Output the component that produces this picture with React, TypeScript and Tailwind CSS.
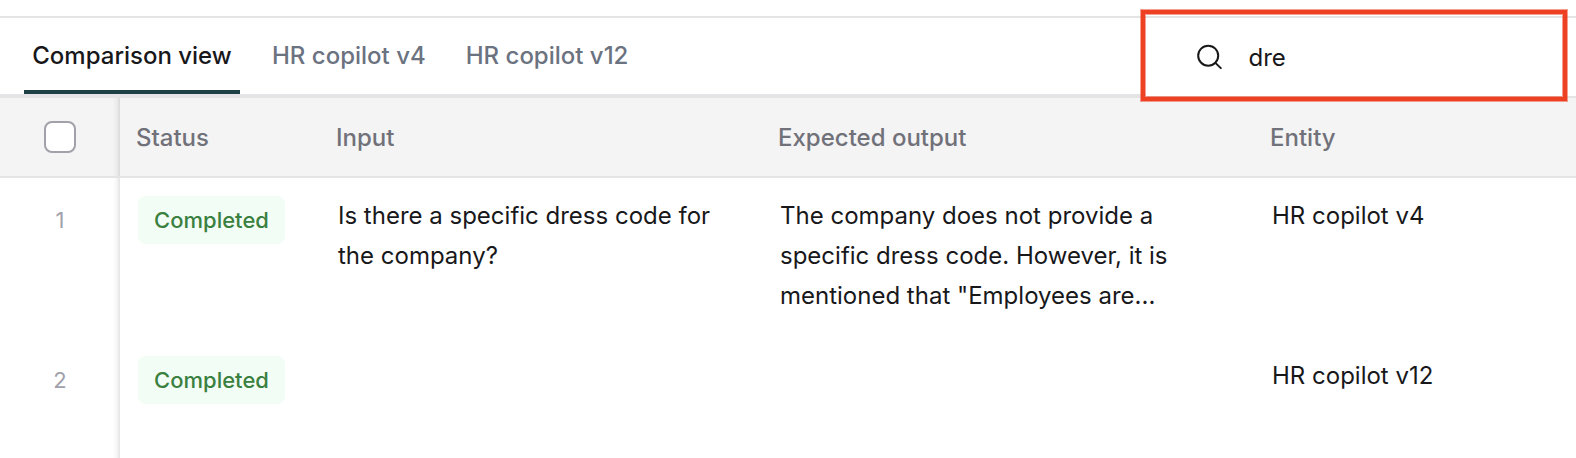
import React from "react";

const tabs = ["Comparison view", "HR copilot v4", "HR copilot v12"];

const rows = [
  {
    id: 1,
    status: "Completed",
    input: ["Is there a specific dress code for", "the company?"],
    expected: [
      "The company does not provide a",
      "specific dress code. However, it is",
      'mentioned that "Employees are...',
    ],
    entity: "HR copilot v4",
  },
  { id: 2, status: "Completed", input: [], expected: [], entity: "HR copilot v12" },
];

const edge =
  "w-[120px] shrink-0 flex justify-center bg-[linear-gradient(to_left,rgba(0,0,0,0.11),rgba(0,0,0,0.04)_3px,transparent_7px)]";

function Lines({ lines }: { lines: string[] }) {
  return (
    <>
      {lines.map((line) => (
        <div key={line} className="whitespace-nowrap">
          {line}
        </div>
      ))}
    </>
  );
}

export default function App() {
  return (
    <div className="relative flex h-[458px] w-[1576px] flex-col overflow-hidden bg-white pt-4 font-['Inter',sans-serif] text-2xl text-[#18181b]">
      <div className="flex h-[82px] shrink-0 border-y-2 border-[#e4e4e4]">
        <div className="flex grow gap-6 border-b-2 border-[#e4e4e7] pl-6">
          {tabs.map((tab, i) => (
            <button
              key={tab}
              className={
                i === 0
                  ? "h-[76px] w-[216px] border-b-4 border-[#1d4044] pt-[3px] font-medium whitespace-nowrap text-[#18181b]"
                  : "h-[76px] border-b-4 border-transparent px-2 pt-[3px] font-medium whitespace-nowrap text-[#6b7280]"
              }
            >
              {tab}
            </button>
          ))}
        </div>
        <label className="flex w-[430px] shrink-0 items-center gap-[24.5px] pl-[50px]">
          <svg className="h-7 w-7" viewBox="0 0 28 28" fill="none" stroke="#18181b" strokeWidth="2" strokeLinecap="round">
            <circle cx="12.2" cy="12.7" r="10" />
            <path d="m19.4 19.9 5.4 5.2" />
          </svg>
          <input className="w-[280px] bg-transparent pt-[2px] outline-none" defaultValue="dre" />
        </label>
      </div>

      <div className="flex h-20 shrink-0 items-stretch border-b-2 border-[#e4e4e4] bg-[#f4f4f4] font-medium text-[#71717a]">
        <div className={edge}>
          <span className="mt-[23px] size-8 rounded-lg border-2 border-[#a1a1aa] bg-white" />
        </div>
        <div className="flex w-[200px] items-center pt-[2px] pl-4">Status</div>
        <div className="flex w-[442px] items-center pt-[2px] pl-4">Input</div>
        <div className="flex w-[492px] items-center pt-[2px] pl-4">Expected output</div>
        <div className="flex items-center pt-[2px] pl-4">Entity</div>
      </div>

      {rows.map((row) => (
        <div key={row.id} className="flex h-40 shrink-0 leading-10">
          <div className={edge}>
            <span className="pt-[22px] text-[22px] text-[#a1a1aa]">{row.id}</span>
          </div>
          <div className="w-[200px] shrink-0 pt-[18px] pl-[18px]">
            <span className="flex h-12 w-[147px] items-center justify-center rounded-lg bg-[#f2fdf5] text-[22px] font-medium text-[#3a8040]">
              {row.status}
            </span>
          </div>
          <div className="w-[442px] shrink-0 pt-[18px] pl-[18px]">
            <Lines lines={row.input} />
          </div>
          <div className="w-[492px] shrink-0 pt-[18px] pl-[18px]">
            <Lines lines={row.expected} />
          </div>
          <div className="pt-[18px] pl-[18px] whitespace-nowrap">{row.entity}</div>
        </div>
      ))}

      <div className="pointer-events-none absolute top-[10px] left-[1141px] h-[91px] w-[426px] border-4 border-[#ee4023] shadow-[0_0_0_1px_rgba(238,64,35,0.5),inset_0_0_0_1px_rgba(238,64,35,0.5)]" />
    </div>
  );
}
